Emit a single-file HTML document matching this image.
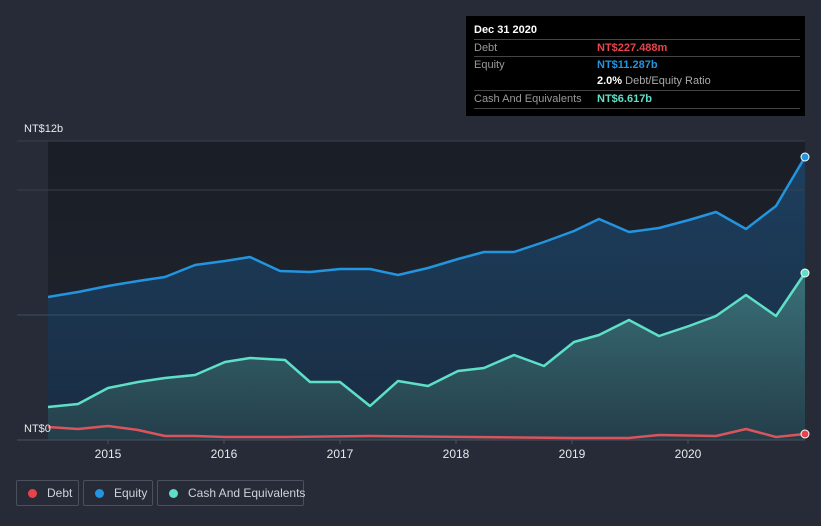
<!DOCTYPE html>
<html><head><style>
html,body{margin:0;width:821px;height:526px;overflow:hidden}
body{background:#262b37;font-family:"Liberation Sans",sans-serif;position:relative}
.tt{position:absolute;left:466px;top:16px;width:339px;height:100px;background:#000;color:#fff;font-size:11px}
.row{position:absolute;left:8px;width:326px;border-top:1px solid #444;height:17px;line-height:17px}
.lbl{color:#999;position:absolute;left:0}
.val{position:absolute;left:123px;font-weight:bold}
.leg{position:absolute;top:480px;height:26px;border:1px solid #4a505c;border-radius:2px;color:#cfd2d8;font-size:12px;line-height:24px;box-sizing:border-box;white-space:nowrap}
.dot{display:inline-block;width:9px;height:9px;border-radius:50%;margin:0 10px 0 11px;vertical-align:-1px}
</style></head><body>
<svg width="821" height="526" style="position:absolute;left:0;top:0">
<defs>
<linearGradient id="bg" x1="0" y1="0" x2="0" y2="1"><stop offset="0" stop-color="#1a1e26"/><stop offset="1" stop-color="#1f2530"/></linearGradient>
<linearGradient id="eq" x1="0" y1="0" x2="0" y2="1"><stop offset="0" stop-color="#1c3f5e"/><stop offset="1" stop-color="#1a2c42"/></linearGradient>
<linearGradient id="cs" x1="0" y1="0" x2="0" y2="1"><stop offset="0" stop-color="#3a7078"/><stop offset="1" stop-color="#243e4a"/></linearGradient>
</defs>
<rect x="17" y="141" width="788" height="299" fill="#262b37"/>
<rect x="48" y="141" width="757" height="299" fill="url(#bg)"/>
<line x1="17" y1="141" x2="805" y2="141" stroke="#3b404b"/>
<polygon fill="url(#eq)" points="48,297 78,292 108,286 138,281 165,277 195,265 225,261 250,257 280,271 310,272 340,269 370,269 398,275 428,268 458,259 484,252 514,252 544,242 574,231 599,219 629,232 659,228 689,220 716,212 746,229 776,206 805,157 805,440 48,440"/>
<line x1="17" y1="190" x2="805" y2="190" stroke="#3a404b"/>
<line x1="17" y1="315" x2="805" y2="315" stroke="#3a4f60"/>
<polygon fill="url(#cs)" points="48,407 78,404 108,388 138,382 165,378 195,375 225,362 250,358 285,360 310,382 340,382 370,406 398,381 428,386 458,371 484,368 514,355 544,366 574,342 599,335 629,320 659,336 689,326 716,316 746,295 776,316 805,273 805,440 48,440"/>
<polyline fill="none" stroke="#2394df" stroke-width="2.5" stroke-linejoin="round" points="48,297 78,292 108,286 138,281 165,277 195,265 225,261 250,257 280,271 310,272 340,269 370,269 398,275 428,268 458,259 484,252 514,252 544,242 574,231 599,219 629,232 659,228 689,220 716,212 746,229 776,206 805,157"/>
<polyline fill="none" stroke="#5ee0c8" stroke-width="2.5" stroke-linejoin="round" points="48,407 78,404 108,388 138,382 165,378 195,375 225,362 250,358 285,360 310,382 340,382 370,406 398,381 428,386 458,371 484,368 514,355 544,366 574,342 599,335 629,320 659,336 689,326 716,316 746,295 776,316 805,273"/>
<polyline fill="none" stroke="#d9545c" stroke-width="2.5" stroke-linejoin="round" points="48,427 78,429 108,426 138,430 165,436 195,436 225,437 285,437 370,436 574,438 629,438 659,435 716,436 746,429 776,437 805,434"/>
<circle cx="805" cy="157" r="4" fill="#2394df" stroke="#fff" stroke-width="1"/>
<circle cx="805" cy="273" r="4" fill="#5ee0c8" stroke="#fff" stroke-width="1"/>
<circle cx="805" cy="434" r="4" fill="#e8434b" stroke="#fff" stroke-width="1"/>
<line x1="17" y1="440" x2="805" y2="440" stroke="#4a505c"/>
<g stroke="#4a505c"><line x1="108" y1="440" x2="108" y2="444"/><line x1="224" y1="440" x2="224" y2="444"/><line x1="340" y1="440" x2="340" y2="444"/><line x1="456" y1="440" x2="456" y2="444"/><line x1="572" y1="440" x2="572" y2="444"/><line x1="688" y1="440" x2="688" y2="444"/></g>
<g fill="#e6e8eb" font-size="12" text-anchor="middle" font-family="Liberation Sans,sans-serif"><text x="108" y="458">2015</text><text x="224" y="458">2016</text><text x="340" y="458">2017</text><text x="456" y="458">2018</text><text x="572" y="458">2019</text><text x="688" y="458">2020</text></g>
<g fill="#e6e8eb" font-size="11" font-family="Liberation Sans,sans-serif"><text x="24" y="132">NT$12b</text><text x="24" y="432">NT$0</text></g>
</svg>
<div class="tt">
<div style="position:absolute;left:8px;top:8px;font-weight:bold">Dec 31 2020</div>
<div class="row" style="top:23px"><span class="lbl">Debt</span><span class="val" style="color:#e8434b">NT$227.488m</span></div>
<div class="row" style="top:40px"><span class="lbl">Equity</span><span class="val" style="color:#2394df">NT$11.287b</span></div>
<div class="row" style="top:57px;border-top:none"><span class="val" style="color:#fff">2.0% <span style="color:#aaa;font-weight:normal">Debt/Equity Ratio</span></span></div>
<div class="row" style="top:74px;border-bottom:1px solid #444"><span class="lbl">Cash And Equivalents</span><span class="val" style="color:#5ee0c8">NT$6.617b</span></div>
</div>
<div class="leg" style="left:16px;width:63px"><span class="dot" style="background:#e8434b"></span>Debt</div>
<div class="leg" style="left:83px;width:70px"><span class="dot" style="background:#2394df"></span>Equity</div>
<div class="leg" style="left:157px;width:147px"><span class="dot" style="background:#5ee0c8"></span>Cash And Equivalents</div>
</body></html>
